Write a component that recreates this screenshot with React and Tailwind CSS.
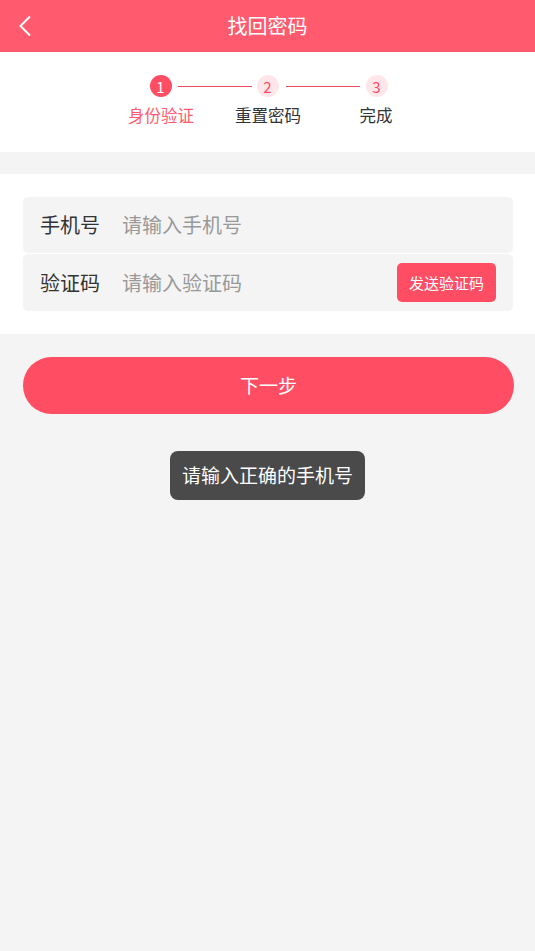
import React from "react";

const font = { fontFamily: '"Noto Sans CJK SC", "Noto Sans", sans-serif' };

function Circle({ n, active }) {
  return (
    <div
      className={
        "w-[22px] h-[22px] rounded-full flex items-center justify-center text-[15px] leading-none " +
        (active ? "bg-[#ff4d63] text-white" : "bg-[#ffe6ea] text-[#ff4d63]")
      }
    >
      {n}
    </div>
  );
}

export default function App() {
  return (
    <div className="w-[535px] h-[951px] bg-[#f4f4f4] flex flex-col" style={font}>
      {/* header */}
      <div className="h-[52px] bg-[#ff5a6e] flex items-center px-[18px]">
        <svg width="14" height="22" viewBox="0 0 14 22" className="shrink-0">
          <path d="M12 1.5 L2.5 11 L12 20.5" fill="none" stroke="#fff" strokeWidth="2" />
        </svg>
        <div className="flex-1 text-center text-white text-[20px] leading-none mr-[14px]">找回密码</div>
      </div>

      {/* steps */}
      <div className="h-[100px] bg-white flex flex-col items-center pt-[23px]">
        <div className="flex items-center ml-[2px]">
          <Circle n="1" active />
          <div className="ml-[6px] mr-[5px] w-[74px] h-px bg-[#f04a5c]" />
          <Circle n="2" />
          <div className="ml-[7px] mr-[6px] w-[74px] h-px bg-[#f04a5c]" />
          <Circle n="3" />
        </div>
        <div className="flex mt-[8px] text-[16.5px] leading-[20px] ml-[2px]">
          <div className="w-[100px] text-center text-[#ff5a6e]">身份验证</div>
          <div className="w-[100px] ml-[7px] text-center text-[#333]">重置密码</div>
          <div className="w-[100px] ml-[8px] text-center text-[#333]">完成</div>
        </div>
      </div>

      {/* form */}
      <div className="mt-[22px] bg-white pl-[23px] pr-[22px] pt-[23px] pb-[23px] flex flex-col gap-[1px]">
        <div className="h-[56px] bg-[#f4f4f4] rounded-[5px] flex items-center pl-[17px] text-[20px]">
          <span className="text-[#333] w-[82px]">手机号</span>
          <span className="text-[#999]">请输入手机号</span>
        </div>
        <div className="h-[57px] bg-[#f4f4f4] rounded-[5px] flex items-center pl-[17px] pr-[17px] text-[20px]">
          <span className="text-[#333] w-[82px]">验证码</span>
          <span className="text-[#999] flex-1">请输入验证码</span>
          <button className="w-[99px] h-[39px] rounded-[5px] bg-[#ff4d63] text-white text-[15px] leading-none">
            发送验证码
          </button>
        </div>
      </div>

      {/* next */}
      <div className="pl-[23px] pr-[21px] pt-[23px]">
        <button className="w-full h-[57px] rounded-full bg-[#ff4d63] text-white text-[19px]">下一步</button>
      </div>

      {/* toast */}
      <div className="flex justify-center mt-[37px]">
        <div className="h-[49px] px-[12px] rounded-[8px] bg-[#4a4a4a] text-white text-[19px] flex items-center">
          请输入正确的手机号
        </div>
      </div>
    </div>
  );
}
